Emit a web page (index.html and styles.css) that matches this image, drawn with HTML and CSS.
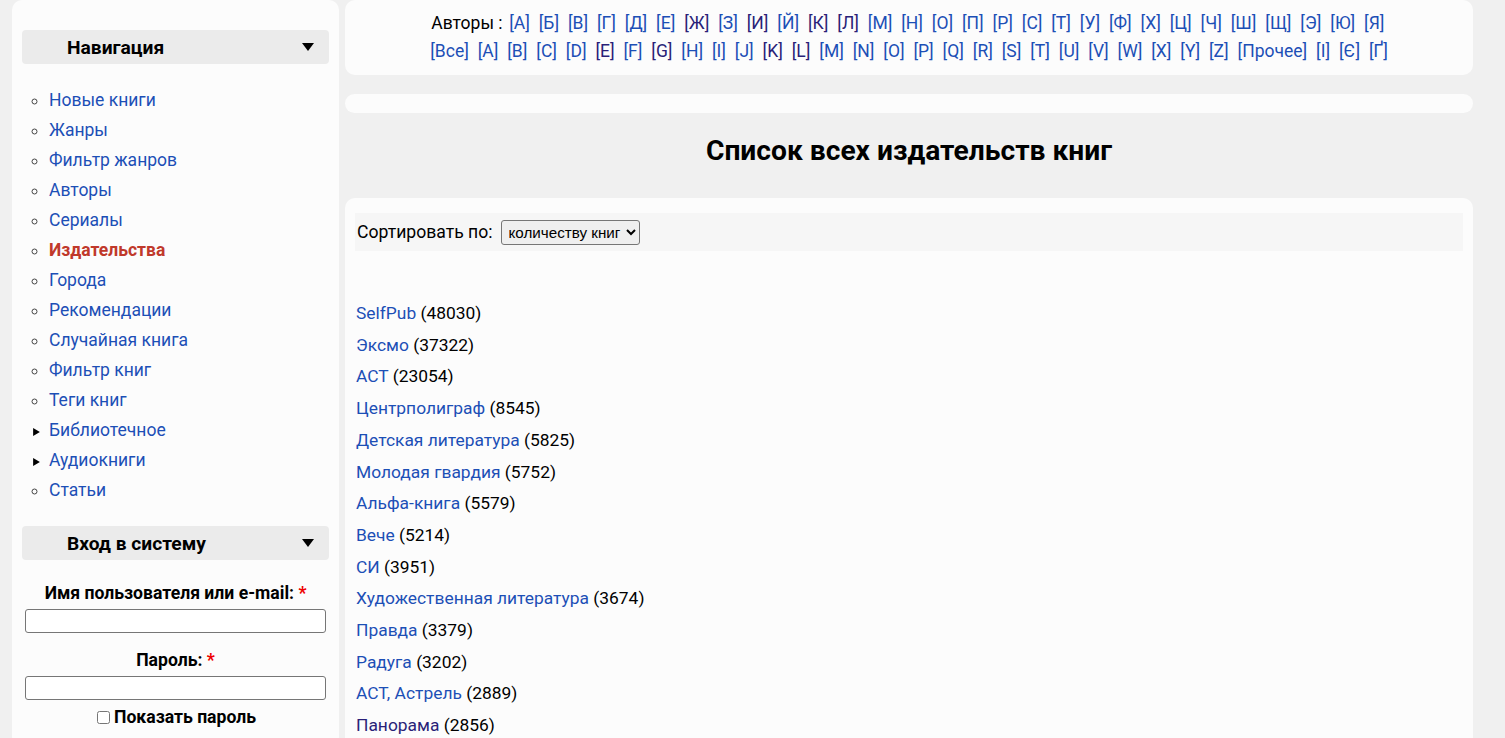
FILE: index.html
```html
<!DOCTYPE html>
<html lang="ru">
<head>
    <meta charset="UTF-8">
    <title>Список всех издательств книг</title>
    <link rel="stylesheet" href="styles.css">
</head>
<body>
    <div class="page">
        <!-- Левая колонка -->
        <aside class="sidebar">
            <div class="block">
                <h2 class="block-title">Навигация <span class="toggle"></span></h2>
                <ul class="nav">
                    <li><a href="#">Новые книги</a></li>
                    <li><a href="#">Жанры</a></li>
                    <li><a href="#">Фильтр жанров</a></li>
                    <li><a href="#">Авторы</a></li>
                    <li><a href="#">Сериалы</a></li>
                    <li><a href="#" class="active">Издательства</a></li>
                    <li><a href="#">Города</a></li>
                    <li><a href="#">Рекомендации</a></li>
                    <li><a href="#">Случайная книга</a></li>
                    <li><a href="#">Фильтр книг</a></li>
                    <li><a href="#">Теги книг</a></li>
                    <li class="collapsed"><a href="#">Библиотечное</a></li>
                    <li class="collapsed"><a href="#">Аудиокниги</a></li>
                    <li><a href="#">Статьи</a></li>
                </ul>
            </div>

            <div class="block">
                <h2 class="block-title">Вход в систему <span class="toggle"></span></h2>
                <form class="login">
                    <label for="name">Имя пользователя или e-mail: <span class="req">*</span></label>
                    <input type="text" id="name">
                    <label for="pass">Пароль: <span class="req">*</span></label>
                    <input type="password" id="pass">
                    <div class="show-pass"><input type="checkbox" id="show"> Показать пароль</div>
                </form>
            </div>
        </aside>

        <!-- Основная часть -->
        <main class="content">
            <div class="card letters">
                Авторы :
                <a href="#">[А]</a> <a href="#">[Б]</a> <a href="#">[В]</a> <a href="#">[Г]</a> <a href="#">[Д]</a> <a href="#">[Е]</a> <a href="#" class="seen">[Ж]</a> <a href="#">[З]</a> <a href="#" class="seen">[И]</a> <a href="#">[Й]</a> <a href="#" class="seen">[К]</a> <a href="#" class="seen">[Л]</a> <a href="#">[М]</a> <a href="#">[Н]</a> <a href="#">[О]</a> <a href="#">[П]</a> <a href="#">[Р]</a> <a href="#">[С]</a> <a href="#">[Т]</a> <a href="#">[У]</a> <a href="#">[Ф]</a> <a href="#">[Х]</a> <a href="#">[Ц]</a> <a href="#">[Ч]</a> <a href="#">[Ш]</a> <a href="#">[Щ]</a> <a href="#">[Э]</a> <a href="#">[Ю]</a> <a href="#">[Я]</a>
                <br>
                <a href="#">[Все]</a> <a href="#">[A]</a> <a href="#">[B]</a> <a href="#">[C]</a> <a href="#">[D]</a> <a href="#" class="seen">[E]</a> <a href="#">[F]</a> <a href="#" class="seen">[G]</a> <a href="#">[H]</a> <a href="#">[I]</a> <a href="#">[J]</a> <a href="#" class="seen">[K]</a> <a href="#" class="seen">[L]</a> <a href="#">[M]</a> <a href="#">[N]</a> <a href="#">[O]</a> <a href="#">[P]</a> <a href="#">[Q]</a> <a href="#">[R]</a> <a href="#">[S]</a> <a href="#">[T]</a> <a href="#">[U]</a> <a href="#">[V]</a> <a href="#">[W]</a> <a href="#">[X]</a> <a href="#">[Y]</a> <a href="#">[Z]</a> <a href="#">[Прочее]</a> <a href="#">[І]</a> <a href="#">[Є]</a> <a href="#">[Ґ]</a>
            </div>

            <div class="card empty"></div>

            <h1 class="page-title">Список всех издательств книг</h1>

            <div class="card publishers">
                <div class="sort-bar">
                    Сортировать по:
                    <select>
                        <option>количеству книг</option>
                        <option>названию</option>
                    </select>
                </div>

                <ul class="pub-list">
                    <li><a href="#">SelfPub</a> (48030)</li>
                    <li><a href="#">Эксмо</a> (37322)</li>
                    <li><a href="#">АСТ</a> (23054)</li>
                    <li><a href="#">Центрполиграф</a> (8545)</li>
                    <li><a href="#">Детская литература</a> (5825)</li>
                    <li><a href="#">Молодая гвардия</a> (5752)</li>
                    <li><a href="#">Альфа-книга</a> (5579)</li>
                    <li><a href="#">Вече</a> (5214)</li>
                    <li><a href="#">СИ</a> (3951)</li>
                    <li><a href="#">Художественная литература</a> (3674)</li>
                    <li><a href="#">Правда</a> (3379)</li>
                    <li><a href="#">Радуга</a> (3202)</li>
                    <li><a href="#">АСТ, Астрель</a> (2889)</li>
                    <li><a href="#" class="seen">Панорама</a> (2856)</li>
                </ul>
            </div>
        </main>
    </div>
</body>
</html>
```

FILE: styles.css
```css
body {
    margin: 0;
    padding: 0;
    font-family: Roboto, "Liberation Sans", sans-serif;
    font-size: 17.4px;
    color: #000;
    background-color: #f0f0f0;
}

a {
    color: #1c4fb6;
    text-decoration: none;
}

a.seen {
    color: #2a1f78;
}

.page {
    display: flex;
    align-items: flex-start;
    gap: 6px;
    padding-left: 12px;
}

/* Боковая колонка */
.sidebar {
    width: 307px;
    flex-shrink: 0;
    background-color: #fcfcfc;
    border-radius: 10px;
    padding: 30px 10px 20px;
}

.block-title {
    display: flex;
    justify-content: space-between;
    align-items: center;
    height: 34px;
    margin: 0;
    padding: 0 15px 0 45px;
    background-color: #ebebeb;
    border-radius: 4px;
    font-size: 19.2px;
    font-weight: bold;
}

.toggle {
    width: 0;
    height: 0;
    border-left: 6px solid transparent;
    border-right: 6px solid transparent;
    border-top: 8px solid #000;
}

.nav {
    margin: 21px 0 21px;
    padding-left: 27px;
    list-style: circle;
    font-size: 17.5px;
    line-height: 30px;
}

.nav li::marker {
    color: #444;
    font-size: 17px;
}

.nav li.collapsed {
    list-style-type: disclosure-closed;
}

.nav li.collapsed::marker {
    color: #000;
    font-size: 12px;
}

.nav a.active {
    color: #c0392b;
    font-weight: bold;
}

.login {
    display: flex;
    flex-direction: column;
    align-items: center;
    padding-top: 22px;
    font-size: 17.6px;
    font-weight: bold;
}

.login label {
    line-height: 22px;
    margin-bottom: 5px;
}

.login input[type="text"],
.login input[type="password"] {
    box-sizing: border-box;
    width: 301px;
    height: 24px;
    border: 1px solid #767676;
    border-radius: 3px;
    background: #fff;
    margin-bottom: 16px;
}

.login input[type="password"] {
    margin-bottom: 7px;
}

.req {
    color: #e00;
}

.show-pass {
    display: flex;
    align-items: center;
    gap: 2px;
    padding-left: 2px;
}

.show-pass input {
    margin: 0 2px 0 0;
}

/* Основная часть */
.content {
    width: 1128px;
    flex-shrink: 0;
}

.card {
    background-color: #fcfcfc;
    border-radius: 10px;
}

.letters {
    padding: 9px 10px 10px;
    text-align: center;
    font-size: 17.5px;
    line-height: 28px;
}

.letters a {
    margin: 0 2.25px;
}

.empty {
    height: 19px;
    margin-top: 19px;
}

.page-title {
    margin: 0;
    padding: 21px 0 31px;
    text-align: center;
    font-size: 28.2px;
    line-height: 33px;
}

.publishers {
    padding: 15px 10px 20px;
}

.sort-bar {
    display: flex;
    align-items: center;
    height: 38px;
    padding-left: 2px;
    font-size: 17.6px;
    background-color: #f6f6f6;
}

.sort-bar select {
    margin-left: 8px;
    height: 25px;
    padding: 0 2px 0 3px;
    font-family: Arial, "Liberation Sans", sans-serif;
    font-size: 15.2px;
    border: 1px solid #767676;
    border-radius: 3px;
    background: #efefef;
}

.pub-list {
    list-style: none;
    margin: 0;
    padding: 47px 0 0 1px;
    line-height: 31.7px;
}
```
